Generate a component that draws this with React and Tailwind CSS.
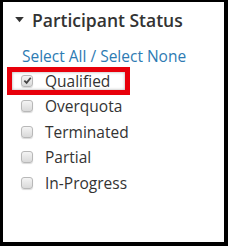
import React from 'react';

const items = [
  { label: 'Qualified', checked: true },
  { label: 'Overquota', checked: false },
  { label: 'Terminated', checked: false },
  { label: 'Partial', checked: false },
  { label: 'In-Progress', checked: false },
];

const Box = ({ checked }) => (
  <span className="flex h-[12px] w-[12px] shrink-0 items-center justify-center rounded-[3px] border border-[#b8b8b8] bg-gradient-to-b from-[#f4f4f4] to-[#d9d9d9] shadow-[0_1px_1px_rgba(0,0,0,0.15)]">
    {checked && (
      <svg width="9" height="9" viewBox="0 0 10 10">
        <path d="M1.5 5.2 L4 7.6 L8.6 2" fill="none" stroke="#444" strokeWidth="2" />
      </svg>
    )}
  </span>
);

export default function App() {
  return (
    <div
      className="h-[246px] w-[228px] overflow-hidden border-t-[2px] border-l-[3px] border-r-[4px] border-b-[4px] border-black bg-white text-[#333]"
      style={{ fontFamily: '"Open Sans", sans-serif' }}
    >
      <div className="flex h-[36px] items-center gap-[8px] pl-[12px]">
        <svg width="9" height="6" viewBox="0 0 10 7">
          <path d="M0 0 L10 0 L5 6 Z" fill="#333" />
        </svg>
        <span className="text-[17.5px] font-semibold leading-[24px]">Participant Status</span>
      </div>
      <div className="mt-[8px] pl-[19px] text-[15.5px] leading-[20px] text-[#2e7bb3]">
        Select All / Select None
      </div>
      <div className="mt-[2px] flex flex-col">
        {items.map((it) => (
          <div key={it.label} className="relative flex h-[25.5px] items-center gap-[12px] pl-[18px]">
            {it.checked && (
              <span className="absolute left-[4px] top-[-1px] h-[28px] w-[123px] border-[5px] border-[#e8000b] shadow-[inset_0_0_3px_rgba(0,0,0,0.35)]" />
            )}
            <Box checked={it.checked} />
            <span className="text-[15.5px] leading-[20px]">{it.label}</span>
          </div>
        ))}
      </div>
    </div>
  );
}
